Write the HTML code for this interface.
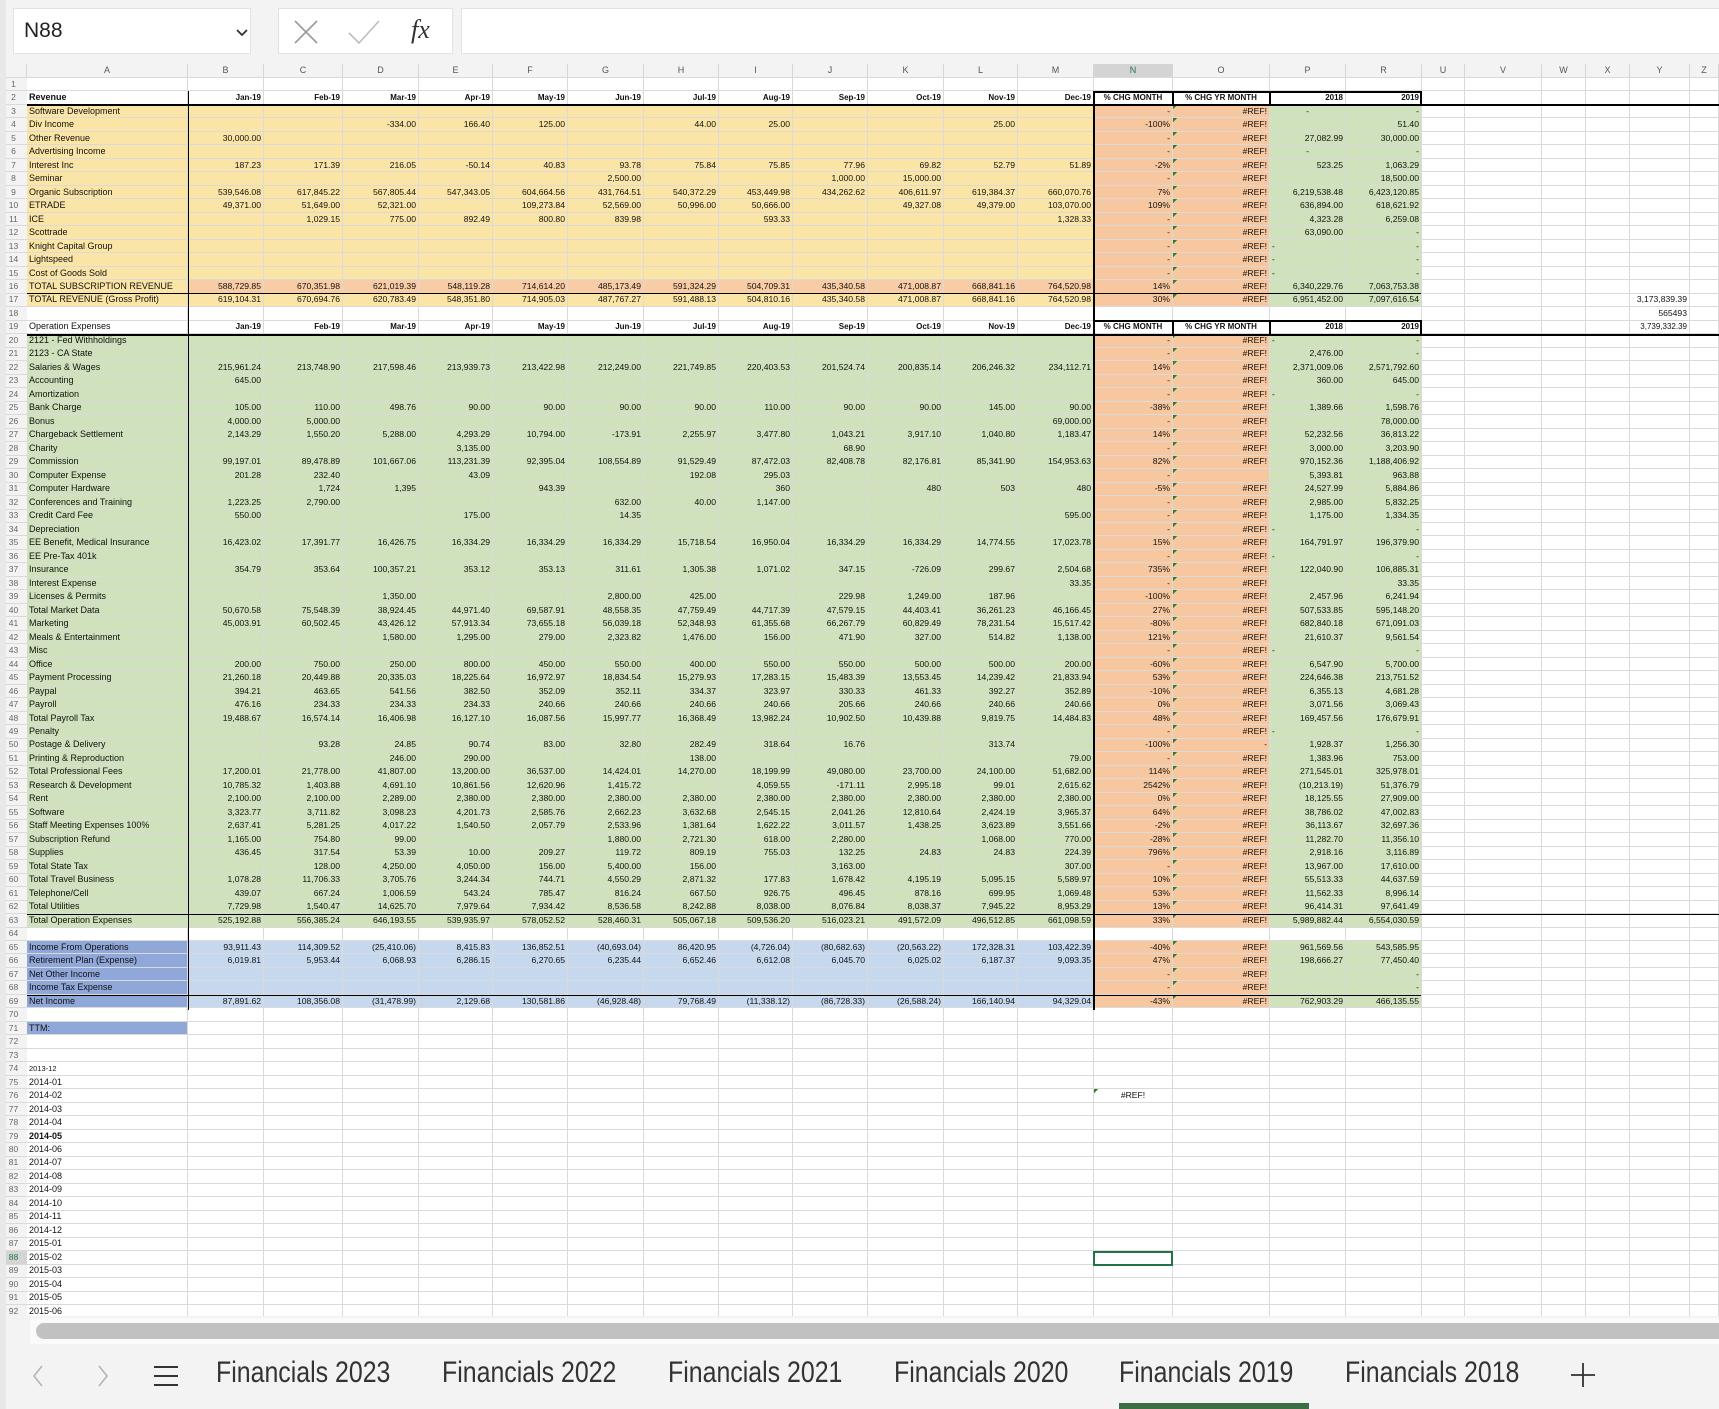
<!DOCTYPE html>
<html><head><meta charset="utf-8"><style>
*{box-sizing:border-box;margin:0;padding:0}
body{width:1719px;height:1409px;overflow:hidden;background:#f3f3f3;position:relative;font-family:"Liberation Sans Narrow","Liberation Sans",sans-serif}
.fb{position:absolute;top:8px;height:46px;background:#fff;border:1px solid #e2e2e2}
#grid{position:absolute;left:0;top:64px;border-collapse:separate;border-spacing:0;table-layout:fixed;width:1719px;background:#fff;font-size:8.6px;color:#111}
#grid tr{height:13.49px}
#grid tr.h{height:14px}
#grid td{border-right:1px solid #dadada;border-bottom:1px solid #dadada;text-align:right;padding:0 2px;white-space:nowrap;overflow:visible;line-height:11px}
#grid th{background:#f3f3f3;color:#666;font-weight:normal;font-size:8.5px;border-bottom:1px solid #dadada;text-align:center;line-height:11px}
#grid tr.h th{border-right:1px solid #d6d6d6;font-size:9px;color:#555}
#grid tr.h th.sel{background:#d4d4d4;color:#217346}
#grid td:nth-child(2){text-align:left;font-size:9px}
tr.y td:nth-child(-n+14){background:#fae5a6;border-color:#fae5a6}
tr.s td:nth-child(n+3):nth-child(-n+14){background:#f8cda5;border-color:#f8cda5}
tr.g td:nth-child(-n+14){background:#cfe2bc;border-color:#cfe2bc}
tr.b td:nth-child(-n+14){background:#c5d8ee;border-color:#c5d8ee}
tr.b td:nth-child(2),tr.t td:nth-child(2){background:#8fa7d9;border-color:#8fa7d9}
tr.y td:nth-child(15),tr.y td:nth-child(16),tr.g td:nth-child(15),tr.g td:nth-child(16),tr.b td:nth-child(15),tr.b td:nth-child(16){background:#f7c8a0;border-color:#f7c8a0}
tr.y td:nth-child(16),tr.g td:nth-child(16),tr.b td:nth-child(16){background-image:linear-gradient(135deg,#3d7a27 3px,transparent 3px);background-repeat:no-repeat}
tr.y td:nth-child(17),tr.y td:nth-child(18),tr.g td:nth-child(17),tr.g td:nth-child(18),tr.b td:nth-child(17),tr.b td:nth-child(18){background-color:#cfe2bc;border-color:#cfe2bc}
tr.hd td{font-weight:bold;font-size:8px}
td.l{text-align:left!important}
td.c{text-align:center!important}
.ln{position:absolute;background:#000}
.tab{position:absolute;top:1355px;font-family:"Liberation Sans Narrow","Liberation Sans",sans-serif;font-size:30px;color:#333;line-height:36px;white-space:nowrap;transform:scaleX(0.83);transform-origin:left center}
</style></head><body>
<div class="fb" style="left:13px;width:238px"><span style="position:absolute;left:10px;top:10px;font-family:'Liberation Sans',sans-serif;font-size:21px;color:#222">N88</span>
<svg style="position:absolute;left:222px;top:20px" width="12" height="8" viewBox="0 0 12 8"><path d="M1 1 L6 6 L11 1" fill="none" stroke="#333" stroke-width="1.8"/></svg></div>
<div class="fb" style="left:278px;width:175px">
<svg style="position:absolute;left:14px;top:10px" width="26" height="26" viewBox="0 0 26 26"><path d="M2 2 L24 24 M24 2 L2 24" stroke="#9a9a9a" stroke-width="1.6" fill="none"/></svg>
<svg style="position:absolute;left:68px;top:10px" width="34" height="26" viewBox="0 0 34 26"><path d="M2 14 L12 24 L32 2" stroke="#bdbdbd" stroke-width="1.6" fill="none"/></svg>
<span style="position:absolute;left:132px;top:6px;font-family:'Liberation Serif',serif;font-style:italic;font-size:26px;color:#333">fx</span></div>
<div class="fb" style="left:461px;width:1270px"></div>

<table id="grid">
<colgroup><col style="width:27px"><col style="width:161px"><col style="width:76px"><col style="width:79px"><col style="width:76px"><col style="width:74px"><col style="width:75px"><col style="width:76px"><col style="width:75px"><col style="width:74px"><col style="width:75px"><col style="width:76px"><col style="width:74px"><col style="width:76px"><col style="width:79px"><col style="width:97px"><col style="width:76px"><col style="width:76px"><col style="width:43px"><col style="width:77px"><col style="width:44px"><col style="width:44px"><col style="width:60px"><col style="width:29px"></colgroup>
<tr class="h"><th></th><th>A</th><th>B</th><th>C</th><th>D</th><th>E</th><th>F</th><th>G</th><th>H</th><th>I</th><th>J</th><th>K</th><th>L</th><th>M</th><th class="sel">N</th><th>O</th><th>P</th><th>R</th><th>U</th><th>V</th><th>W</th><th>X</th><th>Y</th><th>Z</th></tr>
<tr><th>1</th><td></td><td></td><td></td><td></td><td></td><td></td><td></td><td></td><td></td><td></td><td></td><td></td><td></td><td></td><td></td><td></td><td></td><td></td><td></td><td></td><td></td><td></td><td></td></tr>
<tr class="hd"><th>2</th><td>Revenue</td><td>Jan-19</td><td>Feb-19</td><td>Mar-19</td><td>Apr-19</td><td>May-19</td><td>Jun-19</td><td>Jul-19</td><td>Aug-19</td><td>Sep-19</td><td>Oct-19</td><td>Nov-19</td><td>Dec-19</td><td class="c">% CHG MONTH</td><td class="c">% CHG YR MONTH</td><td>2018</td><td>2019</td><td></td><td></td><td></td><td></td><td></td><td></td></tr>
<tr class="y"><th>3</th><td>Software Development</td><td></td><td></td><td></td><td></td><td></td><td></td><td></td><td></td><td></td><td></td><td></td><td></td><td>-</td><td>#REF!</td><td class="c">-</td><td>-</td><td></td><td></td><td></td><td></td><td></td><td></td></tr>
<tr class="y"><th>4</th><td>Div Income</td><td></td><td></td><td>-334.00</td><td>166.40</td><td>125.00</td><td></td><td>44.00</td><td>25.00</td><td></td><td></td><td>25.00</td><td></td><td>-100%</td><td>#REF!</td><td></td><td>51.40</td><td></td><td></td><td></td><td></td><td></td><td></td></tr>
<tr class="y"><th>5</th><td>Other Revenue</td><td>30,000.00</td><td></td><td></td><td></td><td></td><td></td><td></td><td></td><td></td><td></td><td></td><td></td><td>-</td><td>#REF!</td><td>27,082.99</td><td>30,000.00</td><td></td><td></td><td></td><td></td><td></td><td></td></tr>
<tr class="y"><th>6</th><td>Advertising Income</td><td></td><td></td><td></td><td></td><td></td><td></td><td></td><td></td><td></td><td></td><td></td><td></td><td>-</td><td>#REF!</td><td class="c">-</td><td>-</td><td></td><td></td><td></td><td></td><td></td><td></td></tr>
<tr class="y"><th>7</th><td>Interest Inc</td><td>187.23</td><td>171.39</td><td>216.05</td><td>-50.14</td><td>40.83</td><td>93.78</td><td>75.84</td><td>75.85</td><td>77.96</td><td>69.82</td><td>52.79</td><td>51.89</td><td>-2%</td><td>#REF!</td><td>523.25</td><td>1,063.29</td><td></td><td></td><td></td><td></td><td></td><td></td></tr>
<tr class="y"><th>8</th><td>Seminar</td><td></td><td></td><td></td><td></td><td></td><td>2,500.00</td><td></td><td></td><td>1,000.00</td><td>15,000.00</td><td></td><td></td><td>-</td><td>#REF!</td><td></td><td>18,500.00</td><td></td><td></td><td></td><td></td><td></td><td></td></tr>
<tr class="y"><th>9</th><td>Organic Subscription</td><td>539,546.08</td><td>617,845.22</td><td>567,805.44</td><td>547,343.05</td><td>604,664.56</td><td>431,764.51</td><td>540,372.29</td><td>453,449.98</td><td>434,262.62</td><td>406,611.97</td><td>619,384.37</td><td>660,070.76</td><td>7%</td><td>#REF!</td><td>6,219,538.48</td><td>6,423,120.85</td><td></td><td></td><td></td><td></td><td></td><td></td></tr>
<tr class="y"><th>10</th><td>ETRADE</td><td>49,371.00</td><td>51,649.00</td><td>52,321.00</td><td></td><td>109,273.84</td><td>52,569.00</td><td>50,996.00</td><td>50,666.00</td><td></td><td>49,327.08</td><td>49,379.00</td><td>103,070.00</td><td>109%</td><td>#REF!</td><td>636,894.00</td><td>618,621.92</td><td></td><td></td><td></td><td></td><td></td><td></td></tr>
<tr class="y"><th>11</th><td>ICE</td><td></td><td>1,029.15</td><td>775.00</td><td>892.49</td><td>800.80</td><td>839.98</td><td></td><td>593.33</td><td></td><td></td><td></td><td>1,328.33</td><td>-</td><td>#REF!</td><td>4,323.28</td><td>6,259.08</td><td></td><td></td><td></td><td></td><td></td><td></td></tr>
<tr class="y"><th>12</th><td>Scottrade</td><td></td><td></td><td></td><td></td><td></td><td></td><td></td><td></td><td></td><td></td><td></td><td></td><td>-</td><td>#REF!</td><td>63,090.00</td><td>-</td><td></td><td></td><td></td><td></td><td></td><td></td></tr>
<tr class="y"><th>13</th><td>Knight Capital Group</td><td></td><td></td><td></td><td></td><td></td><td></td><td></td><td></td><td></td><td></td><td></td><td></td><td>-</td><td>#REF!</td><td class="l">-</td><td>-</td><td></td><td></td><td></td><td></td><td></td><td></td></tr>
<tr class="y"><th>14</th><td>Lightspeed</td><td></td><td></td><td></td><td></td><td></td><td></td><td></td><td></td><td></td><td></td><td></td><td></td><td>-</td><td>#REF!</td><td class="l">-</td><td>-</td><td></td><td></td><td></td><td></td><td></td><td></td></tr>
<tr class="y"><th>15</th><td>Cost of Goods Sold</td><td></td><td></td><td></td><td></td><td></td><td></td><td></td><td></td><td></td><td></td><td></td><td></td><td>-</td><td>#REF!</td><td class="l">-</td><td>-</td><td></td><td></td><td></td><td></td><td></td><td></td></tr>
<tr class="y s"><th>16</th><td>TOTAL SUBSCRIPTION REVENUE</td><td>588,729.85</td><td>670,351.98</td><td>621,019.39</td><td>548,119.28</td><td>714,614.20</td><td>485,173.49</td><td>591,324.29</td><td>504,709.31</td><td>435,340.58</td><td>471,008.87</td><td>668,841.16</td><td>764,520.98</td><td>14%</td><td>#REF!</td><td>6,340,229.76</td><td>7,063,753.38</td><td></td><td></td><td></td><td></td><td></td><td></td></tr>
<tr class="y"><th>17</th><td>TOTAL REVENUE (Gross Profit)</td><td>619,104.31</td><td>670,694.76</td><td>620,783.49</td><td>548,351.80</td><td>714,905.03</td><td>487,767.27</td><td>591,488.13</td><td>504,810.16</td><td>435,340.58</td><td>471,008.87</td><td>668,841.16</td><td>764,520.98</td><td>30%</td><td>#REF!</td><td>6,951,452.00</td><td>7,097,616.54</td><td></td><td></td><td></td><td></td><td>3,173,839.39</td><td></td></tr>
<tr><th>18</th><td></td><td></td><td></td><td></td><td></td><td></td><td></td><td></td><td></td><td></td><td></td><td></td><td></td><td></td><td></td><td></td><td></td><td></td><td></td><td></td><td></td><td>565493</td><td></td></tr>
<tr class="hd"><th>19</th><td style="font-weight:normal">Operation Expenses</td><td>Jan-19</td><td>Feb-19</td><td>Mar-19</td><td>Apr-19</td><td>May-19</td><td>Jun-19</td><td>Jul-19</td><td>Aug-19</td><td>Sep-19</td><td>Oct-19</td><td>Nov-19</td><td>Dec-19</td><td class="c">% CHG MONTH</td><td class="c">% CHG YR MONTH</td><td>2018</td><td>2019</td><td></td><td></td><td></td><td></td><td style="font-weight:normal">3,739,332.39</td><td></td></tr>
<tr class="g"><th>20</th><td>2121 - Fed Withholdings</td><td></td><td></td><td></td><td></td><td></td><td></td><td></td><td></td><td></td><td></td><td></td><td></td><td>-</td><td>#REF!</td><td class="l">-</td><td>-</td><td></td><td></td><td></td><td></td><td></td><td></td></tr>
<tr class="g"><th>21</th><td>2123 - CA State</td><td></td><td></td><td></td><td></td><td></td><td></td><td></td><td></td><td></td><td></td><td></td><td></td><td>-</td><td>#REF!</td><td>2,476.00</td><td>-</td><td></td><td></td><td></td><td></td><td></td><td></td></tr>
<tr class="g"><th>22</th><td>Salaries &amp; Wages</td><td>215,961.24</td><td>213,748.90</td><td>217,598.46</td><td>213,939.73</td><td>213,422.98</td><td>212,249.00</td><td>221,749.85</td><td>220,403.53</td><td>201,524.74</td><td>200,835.14</td><td>206,246.32</td><td>234,112.71</td><td>14%</td><td>#REF!</td><td>2,371,009.06</td><td>2,571,792.60</td><td></td><td></td><td></td><td></td><td></td><td></td></tr>
<tr class="g"><th>23</th><td>Accounting</td><td>645.00</td><td></td><td></td><td></td><td></td><td></td><td></td><td></td><td></td><td></td><td></td><td></td><td>-</td><td>#REF!</td><td>360.00</td><td>645.00</td><td></td><td></td><td></td><td></td><td></td><td></td></tr>
<tr class="g"><th>24</th><td>Amortization</td><td></td><td></td><td></td><td></td><td></td><td></td><td></td><td></td><td></td><td></td><td></td><td></td><td>-</td><td>#REF!</td><td class="l">-</td><td>-</td><td></td><td></td><td></td><td></td><td></td><td></td></tr>
<tr class="g"><th>25</th><td>Bank Charge</td><td>105.00</td><td>110.00</td><td>498.76</td><td>90.00</td><td>90.00</td><td>90.00</td><td>90.00</td><td>110.00</td><td>90.00</td><td>90.00</td><td>145.00</td><td>90.00</td><td>-38%</td><td>#REF!</td><td>1,389.66</td><td>1,598.76</td><td></td><td></td><td></td><td></td><td></td><td></td></tr>
<tr class="g"><th>26</th><td>Bonus</td><td>4,000.00</td><td>5,000.00</td><td></td><td></td><td></td><td></td><td></td><td></td><td></td><td></td><td></td><td>69,000.00</td><td>-</td><td>#REF!</td><td></td><td>78,000.00</td><td></td><td></td><td></td><td></td><td></td><td></td></tr>
<tr class="g"><th>27</th><td>Chargeback Settlement</td><td>2,143.29</td><td>1,550.20</td><td>5,288.00</td><td>4,293.29</td><td>10,794.00</td><td>-173.91</td><td>2,255.97</td><td>3,477.80</td><td>1,043.21</td><td>3,917.10</td><td>1,040.80</td><td>1,183.47</td><td>14%</td><td>#REF!</td><td>52,232.56</td><td>36,813.22</td><td></td><td></td><td></td><td></td><td></td><td></td></tr>
<tr class="g"><th>28</th><td>Charity</td><td></td><td></td><td></td><td>3,135.00</td><td></td><td></td><td></td><td></td><td>68.90</td><td></td><td></td><td></td><td>-</td><td>#REF!</td><td>3,000.00</td><td>3,203.90</td><td></td><td></td><td></td><td></td><td></td><td></td></tr>
<tr class="g"><th>29</th><td>Commission</td><td>99,197.01</td><td>89,478.89</td><td>101,667.06</td><td>113,231.39</td><td>92,395.04</td><td>108,554.89</td><td>91,529.49</td><td>87,472.03</td><td>82,408.78</td><td>82,176.81</td><td>85,341.90</td><td>154,953.63</td><td>82%</td><td>#REF!</td><td>970,152.36</td><td>1,188,406.92</td><td></td><td></td><td></td><td></td><td></td><td></td></tr>
<tr class="g"><th>30</th><td>Computer Expense</td><td>201.28</td><td>232.40</td><td></td><td>43.09</td><td></td><td></td><td>192.08</td><td>295.03</td><td></td><td></td><td></td><td></td><td>-</td><td></td><td>5,393.81</td><td>963.88</td><td></td><td></td><td></td><td></td><td></td><td></td></tr>
<tr class="g"><th>31</th><td>Computer Hardware</td><td></td><td>1,724</td><td>1,395</td><td></td><td>943.39</td><td></td><td></td><td>360</td><td></td><td>480</td><td>503</td><td>480</td><td>-5%</td><td>#REF!</td><td>24,527.99</td><td>5,884.86</td><td></td><td></td><td></td><td></td><td></td><td></td></tr>
<tr class="g"><th>32</th><td>Conferences and Training</td><td>1,223.25</td><td>2,790.00</td><td></td><td></td><td></td><td>632.00</td><td>40.00</td><td>1,147.00</td><td></td><td></td><td></td><td></td><td>-</td><td>#REF!</td><td>2,985.00</td><td>5,832.25</td><td></td><td></td><td></td><td></td><td></td><td></td></tr>
<tr class="g"><th>33</th><td>Credit Card Fee</td><td>550.00</td><td></td><td></td><td>175.00</td><td></td><td>14.35</td><td></td><td></td><td></td><td></td><td></td><td>595.00</td><td>-</td><td>#REF!</td><td>1,175.00</td><td>1,334.35</td><td></td><td></td><td></td><td></td><td></td><td></td></tr>
<tr class="g"><th>34</th><td>Depreciation</td><td></td><td></td><td></td><td></td><td></td><td></td><td></td><td></td><td></td><td></td><td></td><td></td><td>-</td><td>#REF!</td><td class="l">-</td><td>-</td><td></td><td></td><td></td><td></td><td></td><td></td></tr>
<tr class="g"><th>35</th><td>EE Benefit, Medical Insurance</td><td>16,423.02</td><td>17,391.77</td><td>16,426.75</td><td>16,334.29</td><td>16,334.29</td><td>16,334.29</td><td>15,718.54</td><td>16,950.04</td><td>16,334.29</td><td>16,334.29</td><td>14,774.55</td><td>17,023.78</td><td>15%</td><td>#REF!</td><td>164,791.97</td><td>196,379.90</td><td></td><td></td><td></td><td></td><td></td><td></td></tr>
<tr class="g"><th>36</th><td>EE Pre-Tax 401k</td><td></td><td></td><td></td><td></td><td></td><td></td><td></td><td></td><td></td><td></td><td></td><td></td><td>-</td><td>#REF!</td><td class="l">-</td><td>-</td><td></td><td></td><td></td><td></td><td></td><td></td></tr>
<tr class="g"><th>37</th><td>Insurance</td><td>354.79</td><td>353.64</td><td>100,357.21</td><td>353.12</td><td>353.13</td><td>311.61</td><td>1,305.38</td><td>1,071.02</td><td>347.15</td><td>-726.09</td><td>299.67</td><td>2,504.68</td><td>735%</td><td>#REF!</td><td>122,040.90</td><td>106,885.31</td><td></td><td></td><td></td><td></td><td></td><td></td></tr>
<tr class="g"><th>38</th><td>Interest Expense</td><td></td><td></td><td></td><td></td><td></td><td></td><td></td><td></td><td></td><td></td><td></td><td>33.35</td><td>-</td><td>#REF!</td><td></td><td>33.35</td><td></td><td></td><td></td><td></td><td></td><td></td></tr>
<tr class="g"><th>39</th><td>Licenses &amp; Permits</td><td></td><td></td><td>1,350.00</td><td></td><td></td><td>2,800.00</td><td>425.00</td><td></td><td>229.98</td><td>1,249.00</td><td>187.96</td><td></td><td>-100%</td><td>#REF!</td><td>2,457.96</td><td>6,241.94</td><td></td><td></td><td></td><td></td><td></td><td></td></tr>
<tr class="g"><th>40</th><td>Total Market Data</td><td>50,670.58</td><td>75,548.39</td><td>38,924.45</td><td>44,971.40</td><td>69,587.91</td><td>48,558.35</td><td>47,759.49</td><td>44,717.39</td><td>47,579.15</td><td>44,403.41</td><td>36,261.23</td><td>46,166.45</td><td>27%</td><td>#REF!</td><td>507,533.85</td><td>595,148.20</td><td></td><td></td><td></td><td></td><td></td><td></td></tr>
<tr class="g"><th>41</th><td>Marketing</td><td>45,003.91</td><td>60,502.45</td><td>43,426.12</td><td>57,913.34</td><td>73,655.18</td><td>56,039.18</td><td>52,348.93</td><td>61,355.68</td><td>66,267.79</td><td>60,829.49</td><td>78,231.54</td><td>15,517.42</td><td>-80%</td><td>#REF!</td><td>682,840.18</td><td>671,091.03</td><td></td><td></td><td></td><td></td><td></td><td></td></tr>
<tr class="g"><th>42</th><td>Meals &amp; Entertainment</td><td></td><td></td><td>1,580.00</td><td>1,295.00</td><td>279.00</td><td>2,323.82</td><td>1,476.00</td><td>156.00</td><td>471.90</td><td>327.00</td><td>514.82</td><td>1,138.00</td><td>121%</td><td>#REF!</td><td>21,610.37</td><td>9,561.54</td><td></td><td></td><td></td><td></td><td></td><td></td></tr>
<tr class="g"><th>43</th><td>Misc</td><td></td><td></td><td></td><td></td><td></td><td></td><td></td><td></td><td></td><td></td><td></td><td></td><td>-</td><td>#REF!</td><td class="l">-</td><td>-</td><td></td><td></td><td></td><td></td><td></td><td></td></tr>
<tr class="g"><th>44</th><td>Office</td><td>200.00</td><td>750.00</td><td>250.00</td><td>800.00</td><td>450.00</td><td>550.00</td><td>400.00</td><td>550.00</td><td>550.00</td><td>500.00</td><td>500.00</td><td>200.00</td><td>-60%</td><td>#REF!</td><td>6,547.90</td><td>5,700.00</td><td></td><td></td><td></td><td></td><td></td><td></td></tr>
<tr class="g"><th>45</th><td>Payment Processing</td><td>21,260.18</td><td>20,449.88</td><td>20,335.03</td><td>18,225.64</td><td>16,972.97</td><td>18,834.54</td><td>15,279.93</td><td>17,283.15</td><td>15,483.39</td><td>13,553.45</td><td>14,239.42</td><td>21,833.94</td><td>53%</td><td>#REF!</td><td>224,646.38</td><td>213,751.52</td><td></td><td></td><td></td><td></td><td></td><td></td></tr>
<tr class="g"><th>46</th><td>Paypal</td><td>394.21</td><td>463.65</td><td>541.56</td><td>382.50</td><td>352.09</td><td>352.11</td><td>334.37</td><td>323.97</td><td>330.33</td><td>461.33</td><td>392.27</td><td>352.89</td><td>-10%</td><td>#REF!</td><td>6,355.13</td><td>4,681.28</td><td></td><td></td><td></td><td></td><td></td><td></td></tr>
<tr class="g"><th>47</th><td>Payroll</td><td>476.16</td><td>234.33</td><td>234.33</td><td>234.33</td><td>240.66</td><td>240.66</td><td>240.66</td><td>240.66</td><td>205.66</td><td>240.66</td><td>240.66</td><td>240.66</td><td>0%</td><td>#REF!</td><td>3,071.56</td><td>3,069.43</td><td></td><td></td><td></td><td></td><td></td><td></td></tr>
<tr class="g"><th>48</th><td>Total Payroll Tax</td><td>19,488.67</td><td>16,574.14</td><td>16,406.98</td><td>16,127.10</td><td>16,087.56</td><td>15,997.77</td><td>16,368.49</td><td>13,982.24</td><td>10,902.50</td><td>10,439.88</td><td>9,819.75</td><td>14,484.83</td><td>48%</td><td>#REF!</td><td>169,457.56</td><td>176,679.91</td><td></td><td></td><td></td><td></td><td></td><td></td></tr>
<tr class="g"><th>49</th><td>Penalty</td><td></td><td></td><td></td><td></td><td></td><td></td><td></td><td></td><td></td><td></td><td></td><td></td><td>-</td><td>#REF!</td><td class="l">-</td><td>-</td><td></td><td></td><td></td><td></td><td></td><td></td></tr>
<tr class="g"><th>50</th><td>Postage &amp; Delivery</td><td></td><td>93.28</td><td>24.85</td><td>90.74</td><td>83.00</td><td>32.80</td><td>282.49</td><td>318.64</td><td>16.76</td><td></td><td>313.74</td><td></td><td>-100%</td><td>-</td><td>1,928.37</td><td>1,256.30</td><td></td><td></td><td></td><td></td><td></td><td></td></tr>
<tr class="g"><th>51</th><td>Printing &amp; Reproduction</td><td></td><td></td><td>246.00</td><td>290.00</td><td></td><td></td><td>138.00</td><td></td><td></td><td></td><td></td><td>79.00</td><td>-</td><td>#REF!</td><td>1,383.96</td><td>753.00</td><td></td><td></td><td></td><td></td><td></td><td></td></tr>
<tr class="g"><th>52</th><td>Total Professional Fees</td><td>17,200.01</td><td>21,778.00</td><td>41,807.00</td><td>13,200.00</td><td>36,537.00</td><td>14,424.01</td><td>14,270.00</td><td>18,199.99</td><td>49,080.00</td><td>23,700.00</td><td>24,100.00</td><td>51,682.00</td><td>114%</td><td>#REF!</td><td>271,545.01</td><td>325,978.01</td><td></td><td></td><td></td><td></td><td></td><td></td></tr>
<tr class="g"><th>53</th><td>Research &amp; Development</td><td>10,785.32</td><td>1,403.88</td><td>4,691.10</td><td>10,861.56</td><td>12,620.96</td><td>1,415.72</td><td></td><td>4,059.55</td><td>-171.11</td><td>2,995.18</td><td>99.01</td><td>2,615.62</td><td>2542%</td><td>#REF!</td><td>(10,213.19)</td><td>51,376.79</td><td></td><td></td><td></td><td></td><td></td><td></td></tr>
<tr class="g"><th>54</th><td>Rent</td><td>2,100.00</td><td>2,100.00</td><td>2,289.00</td><td>2,380.00</td><td>2,380.00</td><td>2,380.00</td><td>2,380.00</td><td>2,380.00</td><td>2,380.00</td><td>2,380.00</td><td>2,380.00</td><td>2,380.00</td><td>0%</td><td>#REF!</td><td>18,125.55</td><td>27,909.00</td><td></td><td></td><td></td><td></td><td></td><td></td></tr>
<tr class="g"><th>55</th><td>Software</td><td>3,323.77</td><td>3,711.82</td><td>3,098.23</td><td>4,201.73</td><td>2,585.76</td><td>2,662.23</td><td>3,632.68</td><td>2,545.15</td><td>2,041.26</td><td>12,810.64</td><td>2,424.19</td><td>3,965.37</td><td>64%</td><td>#REF!</td><td>38,786.02</td><td>47,002.83</td><td></td><td></td><td></td><td></td><td></td><td></td></tr>
<tr class="g"><th>56</th><td>Staff Meeting Expenses 100%</td><td>2,637.41</td><td>5,281.25</td><td>4,017.22</td><td>1,540.50</td><td>2,057.79</td><td>2,533.96</td><td>1,381.64</td><td>1,622.22</td><td>3,011.57</td><td>1,438.25</td><td>3,623.89</td><td>3,551.66</td><td>-2%</td><td>#REF!</td><td>36,113.67</td><td>32,697.36</td><td></td><td></td><td></td><td></td><td></td><td></td></tr>
<tr class="g"><th>57</th><td>Subscription Refund</td><td>1,165.00</td><td>754.80</td><td>99.00</td><td></td><td></td><td>1,880.00</td><td>2,721.30</td><td>618.00</td><td>2,280.00</td><td></td><td>1,068.00</td><td>770.00</td><td>-28%</td><td>#REF!</td><td>11,282.70</td><td>11,356.10</td><td></td><td></td><td></td><td></td><td></td><td></td></tr>
<tr class="g"><th>58</th><td>Supplies</td><td>436.45</td><td>317.54</td><td>53.39</td><td>10.00</td><td>209.27</td><td>119.72</td><td>809.19</td><td>755.03</td><td>132.25</td><td>24.83</td><td>24.83</td><td>224.39</td><td>796%</td><td>#REF!</td><td>2,918.16</td><td>3,116.89</td><td></td><td></td><td></td><td></td><td></td><td></td></tr>
<tr class="g"><th>59</th><td>Total State Tax</td><td></td><td>128.00</td><td>4,250.00</td><td>4,050.00</td><td>156.00</td><td>5,400.00</td><td>156.00</td><td></td><td>3,163.00</td><td></td><td></td><td>307.00</td><td>-</td><td>#REF!</td><td>13,967.00</td><td>17,610.00</td><td></td><td></td><td></td><td></td><td></td><td></td></tr>
<tr class="g"><th>60</th><td>Total Travel Business</td><td>1,078.28</td><td>11,706.33</td><td>3,705.76</td><td>3,244.34</td><td>744.71</td><td>4,550.29</td><td>2,871.32</td><td>177.83</td><td>1,678.42</td><td>4,195.19</td><td>5,095.15</td><td>5,589.97</td><td>10%</td><td>#REF!</td><td>55,513.33</td><td>44,637.59</td><td></td><td></td><td></td><td></td><td></td><td></td></tr>
<tr class="g"><th>61</th><td>Telephone/Cell</td><td>439.07</td><td>667.24</td><td>1,006.59</td><td>543.24</td><td>785.47</td><td>816.24</td><td>667.50</td><td>926.75</td><td>496.45</td><td>878.16</td><td>699.95</td><td>1,069.48</td><td>53%</td><td>#REF!</td><td>11,562.33</td><td>8,996.14</td><td></td><td></td><td></td><td></td><td></td><td></td></tr>
<tr class="g"><th>62</th><td>Total Utilities</td><td>7,729.98</td><td>1,540.47</td><td>14,625.70</td><td>7,979.64</td><td>7,934.42</td><td>8,536.58</td><td>8,242.88</td><td>8,038.00</td><td>8,076.84</td><td>8,038.37</td><td>7,945.22</td><td>8,953.29</td><td>13%</td><td>#REF!</td><td>96,414.31</td><td>97,641.49</td><td></td><td></td><td></td><td></td><td></td><td></td></tr>
<tr class="g"><th>63</th><td>Total Operation Expenses</td><td>525,192.88</td><td>556,385.24</td><td>646,193.55</td><td>539,935.97</td><td>578,052.52</td><td>528,460.31</td><td>505,067.18</td><td>509,536.20</td><td>516,023.21</td><td>491,572.09</td><td>496,512.85</td><td>661,098.59</td><td>33%</td><td>#REF!</td><td>5,989,882.44</td><td>6,554,030.59</td><td></td><td></td><td></td><td></td><td></td><td></td></tr>
<tr><th>64</th><td></td><td></td><td></td><td></td><td></td><td></td><td></td><td></td><td></td><td></td><td></td><td></td><td></td><td></td><td></td><td></td><td></td><td></td><td></td><td></td><td></td><td></td><td></td></tr>
<tr class="b"><th>65</th><td>Income From Operations</td><td>93,911.43</td><td>114,309.52</td><td>(25,410.06)</td><td>8,415.83</td><td>136,852.51</td><td>(40,693.04)</td><td>86,420.95</td><td>(4,726.04)</td><td>(80,682.63)</td><td>(20,563.22)</td><td>172,328.31</td><td>103,422.39</td><td>-40%</td><td>#REF!</td><td>961,569.56</td><td>543,585.95</td><td></td><td></td><td></td><td></td><td></td><td></td></tr>
<tr class="b"><th>66</th><td>Retirement Plan (Expense)</td><td>6,019.81</td><td>5,953.44</td><td>6,068.93</td><td>6,286.15</td><td>6,270.65</td><td>6,235.44</td><td>6,652.46</td><td>6,612.08</td><td>6,045.70</td><td>6,025.02</td><td>6,187.37</td><td>9,093.35</td><td>47%</td><td>#REF!</td><td>198,666.27</td><td>77,450.40</td><td></td><td></td><td></td><td></td><td></td><td></td></tr>
<tr class="b"><th>67</th><td>Net Other Income</td><td></td><td></td><td></td><td></td><td></td><td></td><td></td><td></td><td></td><td></td><td></td><td></td><td>-</td><td>#REF!</td><td></td><td>-</td><td></td><td></td><td></td><td></td><td></td><td></td></tr>
<tr class="b"><th>68</th><td>Income Tax Expense</td><td></td><td></td><td></td><td></td><td></td><td></td><td></td><td></td><td></td><td></td><td></td><td></td><td>-</td><td>#REF!</td><td></td><td>-</td><td></td><td></td><td></td><td></td><td></td><td></td></tr>
<tr class="b"><th>69</th><td>Net Income</td><td>87,891.62</td><td>108,356.08</td><td>(31,478.99)</td><td>2,129.68</td><td>130,581.86</td><td>(46,928.48)</td><td>79,768.49</td><td>(11,338.12)</td><td>(86,728.33)</td><td>(26,588.24)</td><td>166,140.94</td><td>94,329.04</td><td>-43%</td><td>#REF!</td><td>762,903.29</td><td>466,135.55</td><td></td><td></td><td></td><td></td><td></td><td></td></tr>
<tr><th>70</th><td></td><td></td><td></td><td></td><td></td><td></td><td></td><td></td><td></td><td></td><td></td><td></td><td></td><td></td><td></td><td></td><td></td><td></td><td></td><td></td><td></td><td></td><td></td></tr>
<tr class="t"><th>71</th><td>TTM:</td><td></td><td></td><td></td><td></td><td></td><td></td><td></td><td></td><td></td><td></td><td></td><td></td><td></td><td></td><td></td><td></td><td></td><td></td><td></td><td></td><td></td><td></td></tr>
<tr><th>72</th><td></td><td></td><td></td><td></td><td></td><td></td><td></td><td></td><td></td><td></td><td></td><td></td><td></td><td></td><td></td><td></td><td></td><td></td><td></td><td></td><td></td><td></td><td></td></tr>
<tr><th>73</th><td></td><td></td><td></td><td></td><td></td><td></td><td></td><td></td><td></td><td></td><td></td><td></td><td></td><td></td><td></td><td></td><td></td><td></td><td></td><td></td><td></td><td></td><td></td></tr>
<tr><th>74</th><td style="font-size:7.5px">2013-12</td><td></td><td></td><td></td><td></td><td></td><td></td><td></td><td></td><td></td><td></td><td></td><td></td><td></td><td></td><td></td><td></td><td></td><td></td><td></td><td></td><td></td><td></td></tr>
<tr><th>75</th><td>2014-01</td><td></td><td></td><td></td><td></td><td></td><td></td><td></td><td></td><td></td><td></td><td></td><td></td><td></td><td></td><td></td><td></td><td></td><td></td><td></td><td></td><td></td><td></td></tr>
<tr><th>76</th><td>2014-02</td><td></td><td></td><td></td><td></td><td></td><td></td><td></td><td></td><td></td><td></td><td></td><td></td><td style="background-image:linear-gradient(135deg,#3d7a27 3px,transparent 3px);background-repeat:no-repeat" class="c">#REF!</td><td></td><td></td><td></td><td></td><td></td><td></td><td></td><td></td><td></td></tr>
<tr><th>77</th><td>2014-03</td><td></td><td></td><td></td><td></td><td></td><td></td><td></td><td></td><td></td><td></td><td></td><td></td><td></td><td></td><td></td><td></td><td></td><td></td><td></td><td></td><td></td><td></td></tr>
<tr><th>78</th><td>2014-04</td><td></td><td></td><td></td><td></td><td></td><td></td><td></td><td></td><td></td><td></td><td></td><td></td><td></td><td></td><td></td><td></td><td></td><td></td><td></td><td></td><td></td><td></td></tr>
<tr><th>79</th><td style="font-weight:bold">2014-05</td><td></td><td></td><td></td><td></td><td></td><td></td><td></td><td></td><td></td><td></td><td></td><td></td><td></td><td></td><td></td><td></td><td></td><td></td><td></td><td></td><td></td><td></td></tr>
<tr><th>80</th><td>2014-06</td><td></td><td></td><td></td><td></td><td></td><td></td><td></td><td></td><td></td><td></td><td></td><td></td><td></td><td></td><td></td><td></td><td></td><td></td><td></td><td></td><td></td><td></td></tr>
<tr><th>81</th><td>2014-07</td><td></td><td></td><td></td><td></td><td></td><td></td><td></td><td></td><td></td><td></td><td></td><td></td><td></td><td></td><td></td><td></td><td></td><td></td><td></td><td></td><td></td><td></td></tr>
<tr><th>82</th><td>2014-08</td><td></td><td></td><td></td><td></td><td></td><td></td><td></td><td></td><td></td><td></td><td></td><td></td><td></td><td></td><td></td><td></td><td></td><td></td><td></td><td></td><td></td><td></td></tr>
<tr><th>83</th><td>2014-09</td><td></td><td></td><td></td><td></td><td></td><td></td><td></td><td></td><td></td><td></td><td></td><td></td><td></td><td></td><td></td><td></td><td></td><td></td><td></td><td></td><td></td><td></td></tr>
<tr><th>84</th><td>2014-10</td><td></td><td></td><td></td><td></td><td></td><td></td><td></td><td></td><td></td><td></td><td></td><td></td><td></td><td></td><td></td><td></td><td></td><td></td><td></td><td></td><td></td><td></td></tr>
<tr><th>85</th><td>2014-11</td><td></td><td></td><td></td><td></td><td></td><td></td><td></td><td></td><td></td><td></td><td></td><td></td><td></td><td></td><td></td><td></td><td></td><td></td><td></td><td></td><td></td><td></td></tr>
<tr><th>86</th><td>2014-12</td><td></td><td></td><td></td><td></td><td></td><td></td><td></td><td></td><td></td><td></td><td></td><td></td><td></td><td></td><td></td><td></td><td></td><td></td><td></td><td></td><td></td><td></td></tr>
<tr><th>87</th><td>2015-01</td><td></td><td></td><td></td><td></td><td></td><td></td><td></td><td></td><td></td><td></td><td></td><td></td><td></td><td></td><td></td><td></td><td></td><td></td><td></td><td></td><td></td><td></td></tr>
<tr><th style="background:#d4d4d4;color:#217346">88</th><td>2015-02</td><td></td><td></td><td></td><td></td><td></td><td></td><td></td><td></td><td></td><td></td><td></td><td></td><td></td><td></td><td></td><td></td><td></td><td></td><td></td><td></td><td></td><td></td></tr>
<tr><th>89</th><td>2015-03</td><td></td><td></td><td></td><td></td><td></td><td></td><td></td><td></td><td></td><td></td><td></td><td></td><td></td><td></td><td></td><td></td><td></td><td></td><td></td><td></td><td></td><td></td></tr>
<tr><th>90</th><td>2015-04</td><td></td><td></td><td></td><td></td><td></td><td></td><td></td><td></td><td></td><td></td><td></td><td></td><td></td><td></td><td></td><td></td><td></td><td></td><td></td><td></td><td></td><td></td></tr>
<tr><th>91</th><td>2015-05</td><td></td><td></td><td></td><td></td><td></td><td></td><td></td><td></td><td></td><td></td><td></td><td></td><td></td><td></td><td></td><td></td><td></td><td></td><td></td><td></td><td></td><td></td></tr>
<tr><th>92</th><td>2015-06</td><td></td><td></td><td></td><td></td><td></td><td></td><td></td><td></td><td></td><td></td><td></td><td></td><td></td><td></td><td></td><td></td><td></td><td></td><td></td><td></td><td></td><td></td></tr>
</table>

<div class="ln" style="left:27px;top:104px;width:1692px;height:2px"></div>
<div class="ln" style="left:1093px;top:91px;width:328px;height:2px"></div>
<div class="ln" style="left:1172px;top:91px;width:2px;height:15px"></div>
<div class="ln" style="left:1269px;top:91px;width:2px;height:15px"></div>
<div class="ln" style="left:1420px;top:91px;width:2px;height:15px"></div>
<div class="ln" style="left:27px;top:293px;width:1394px;height:1px"></div>
<div class="ln" style="left:1093px;top:320px;width:328px;height:2px"></div>
<div class="ln" style="left:1172px;top:320px;width:2px;height:15px"></div>
<div class="ln" style="left:1269px;top:320px;width:2px;height:15px"></div>
<div class="ln" style="left:1420px;top:320px;width:2px;height:15px"></div>
<div class="ln" style="left:27px;top:334px;width:1692px;height:2px"></div>
<div class="ln" style="left:27px;top:914px;width:1692px;height:1px"></div>
<div class="ln" style="left:27px;top:995px;width:1394px;height:1px"></div>
<div class="ln" style="left:188px;top:91px;width:1px;height:919px"></div>
<div class="ln" style="left:1093px;top:91px;width:2px;height:919px"></div>
<div style="position:absolute;left:1093px;top:1251px;width:80px;height:15px;border:2px solid #217346"></div>

<div style="position:absolute;left:0;top:1316px;width:1719px;height:93px;background:#f3f3f3"></div>
<div style="position:absolute;left:0;top:0;width:6px;height:1409px;background:#e8e8e8"></div>
<div style="position:absolute;left:30px;top:1318px;width:1689px;height:26px;background:#fafafa"></div>
<div style="position:absolute;left:36px;top:1323px;width:1700px;height:16px;background:#c1c1c1;border-radius:8px"></div>

<svg style="position:absolute;left:30px;top:1364px" width="16" height="24" viewBox="0 0 16 24"><path d="M12 2 L4 12 L12 22" fill="none" stroke="#b5b5b5" stroke-width="1.6"/></svg>
<svg style="position:absolute;left:95px;top:1364px" width="16" height="24" viewBox="0 0 16 24"><path d="M4 2 L12 12 L4 22" fill="none" stroke="#b5b5b5" stroke-width="1.6"/></svg>
<svg style="position:absolute;left:153px;top:1365px" width="26" height="22" viewBox="0 0 26 22"><path d="M1 2 H25 M1 11 H25 M1 20 H25" stroke="#333" stroke-width="2"/></svg>
<div class="tab" style="left:216px">Financials 2023</div>
<div class="tab" style="left:442px">Financials 2022</div>
<div class="tab" style="left:668px">Financials 2021</div>
<div class="tab" style="left:894px">Financials 2020</div>
<div class="tab" style="left:1119px">Financials 2019</div>
<div class="tab" style="left:1345px">Financials 2018</div>
<svg style="position:absolute;left:1570px;top:1362px" width="26" height="26" viewBox="0 0 26 26"><path d="M13 1 V25 M1 13 H25" stroke="#333" stroke-width="1.8"/></svg>
<div style="position:absolute;left:1119px;top:1403px;width:190px;height:6px;background:#3b6e45"></div>
</body></html>
